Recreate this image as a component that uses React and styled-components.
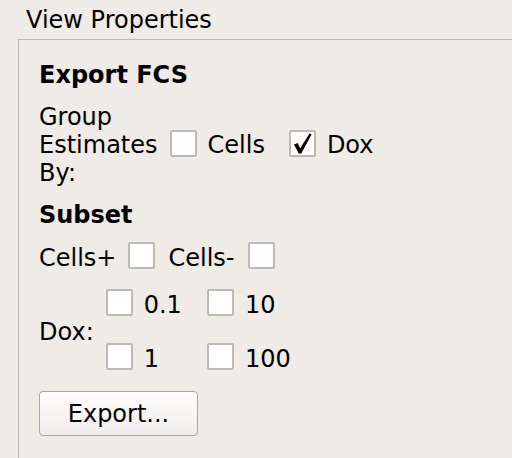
import React from "react";
import styled, { createGlobalStyle } from "styled-components";

const GlobalStyle = createGlobalStyle`
  html, body {
    margin: 0;
    padding: 0;
    background: #efebe7;
    overflow: hidden;
  }
  body {
    font-family: "DejaVu Sans", "Liberation Sans", sans-serif;
    font-size: 24px;
    line-height: 28px;
    color: #000;
  }
`;

const Page = styled.div`
  width: 512px;
  height: 458px;
  padding: 6px 0 0 18px;
  box-sizing: border-box;
  overflow: hidden;
`;

const Legend = styled.div`
  padding-left: 8px;
  height: 28px;
  margin-bottom: 5px;
`;

const GroupBox = styled.div`
  width: 495px;
  height: 440px;
  box-sizing: border-box;
  border: 1px solid #bcb7b2;
  border-bottom: none;
  padding: 21px 0 0 20px;
  display: flex;
  flex-direction: column;
  align-items: flex-start;
`;

const Heading = styled.div`
  font-weight: bold;
  margin-bottom: ${(p) => p.$after || 14}px;
`;

const Row = styled.div`
  display: flex;
  align-items: center;
  margin-bottom: ${(p) => p.$after || 0}px;
`;

const StackedLabel = styled.div`
  width: min-content;
  margin-right: 12px;
`;

const Label = styled.span`
  margin-right: ${(p) => p.$gap || 0}px;
`;

const Item = styled.label`
  display: flex;
  align-items: center;
  gap: 11px;
  margin-right: ${(p) => p.$gap || 0}px;
`;

const Box = styled.span`
  width: 27px;
  height: 27px;
  box-sizing: border-box;
  border: 2px solid #bdb9b4;
  border-radius: 2px;
  background: #fff;
  display: flex;
  align-items: center;
  justify-content: center;
  margin-bottom: 4px;
  margin-right: ${(p) => p.$gap || 0}px;
  flex-shrink: 0;
`;

const DoseGrid = styled.div`
  display: grid;
  grid-template-columns: auto auto;
  column-gap: 25px;
  row-gap: 23px;
`;

const Button = styled.button`
  width: 159px;
  height: 45px;
  margin-top: 17px;
  font: inherit;
  color: #000;
  border: 1.5px solid #aaa6a1;
  border-radius: 4px;
  background: linear-gradient(#fdfcfb, #f0eeec);
  padding: 0;
`;

const Check = () => (
  <svg width="23" height="23" viewBox="0 0 23 23">
    <polygon
      points="3,12.6 6.6,11 9.1,16.2 18.6,1.6 20.6,2.6 10.2,21.6 7.8,21.6"
      fill="#000"
    />
  </svg>
);

const CheckItem = ({ text, checked, gap }) => (
  <Item $gap={gap}>
    <Box>{checked && <Check />}</Box>
    <span>{text}</span>
  </Item>
);

export default function App() {
  return (
    <Page>
      <GlobalStyle />
      <Legend>View Properties</Legend>
      <GroupBox>
        <Heading>Export FCS</Heading>
        <Row $after={14}>
          <StackedLabel>Group Estimates By:</StackedLabel>
          <CheckItem text="Cells" gap={24} />
          <CheckItem text="Dox" checked />
        </Row>
        <Heading $after={13}>Subset</Heading>
        <Row $after={16}>
          <Label $gap={12}>Cells+</Label>
          <Box $gap={13} />
          <Label $gap={13}>Cells-</Label>
          <Box />
        </Row>
        <Row>
          <Label $gap={12}>Dox:</Label>
          <DoseGrid>
            <CheckItem text="0.1" />
            <CheckItem text="10" />
            <CheckItem text="1" />
            <CheckItem text="100" />
          </DoseGrid>
        </Row>
        <Button>Export...</Button>
      </GroupBox>
    </Page>
  );
}
